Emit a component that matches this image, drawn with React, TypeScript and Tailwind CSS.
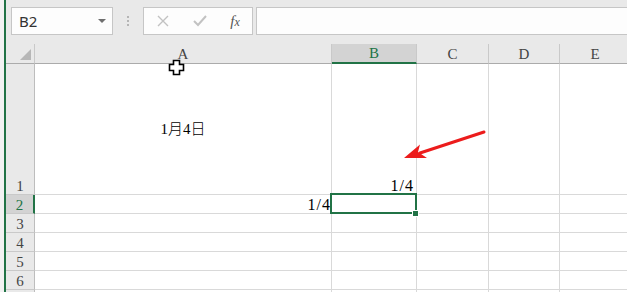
import React from "react";

const serif = { fontFamily: '"Liberation Serif", "Noto Sans CJK SC", serif' };

function Cell({ className = "", children }: { className?: string; children?: React.ReactNode }) {
  return (
    <div className={"box-border border-r border-b border-[#d9d9d9] bg-white text-[15px] text-black leading-none " + className} style={serif}>
      {children}
    </div>
  );
}

function RowHead({ n, active = false }: { n?: number; active?: boolean }) {
  return (
    <div
      className={
        "box-border flex items-end justify-center pb-0 text-[15px] leading-none border-b border-[#c9c9c9] " +
        (active ? "bg-[#d3d3d3] text-[#217346] border-r-2 border-r-[#217346]" : "bg-[#e9e9e9] text-[#444] border-r border-r-[#bdbdbd]")
      }
      style={serif}
    >
      {n}
    </div>
  );
}

function ColHead({ label, active = false }: { label: string; active?: boolean }) {
  return (
    <div
      className={
        "box-border flex items-center justify-center pt-[1px] text-[15px] leading-none border-r border-[#c9c9c9] " +
        (active ? "bg-[#d3d3d3] text-[#217346] border-b-2 border-b-[#217346]" : "bg-[#e9e9e9] text-[#444] border-b border-b-[#ababab]")
      }
      style={serif}
    >
      {label}
    </div>
  );
}

export default function App() {
  return (
    <div className="relative w-[627px] h-[292px] overflow-hidden flex bg-[#e9e9e9]">
      <div className="w-[4px] shrink-0 bg-[#f2f2f2]" />
      <div className="w-[2px] shrink-0 bg-[#217346]" />
      <div className="flex-1 min-w-0 overflow-hidden flex flex-col">
        {/* formula bar */}
        <div className="h-[44px] shrink-0 flex items-start pt-[7px] pl-[5px] box-border">
          <div className="w-[102px] h-[28px] shrink-0 box-border border border-[#c6c6c6] bg-[#fdfdfd] flex items-center pl-[7px] pr-[6px]">
            <span className="text-[15px] text-[#333] flex-1" style={{ fontFamily: '"Noto Sans", "Liberation Sans", sans-serif' }}>
              B2
            </span>
            <svg width="8" height="5" viewBox="0 0 8 5">
              <path d="M0 0 L8 0 L4 4 Z" fill="#6f6f6f" />
            </svg>
          </div>
          <div className="w-[30px] h-[28px] shrink-0 flex flex-col items-center justify-center gap-[2px]">
            <div className="w-[2px] h-[2px] bg-[#b5b5b5]" />
            <div className="w-[2px] h-[2px] bg-[#b5b5b5]" />
            <div className="w-[2px] h-[2px] bg-[#b5b5b5]" />
          </div>
          <div className="w-[110px] h-[28px] shrink-0 box-border border border-[#c6c6c6] bg-[#fdfdfd] flex items-center">
            <div className="w-[38px] flex justify-center">
              <svg width="12" height="12" viewBox="0 0 12 12">
                <path d="M1 1 L11 11 M11 1 L1 11" stroke="#c2c2c2" strokeWidth="1.4" />
              </svg>
            </div>
            <div className="w-[36px] flex justify-center">
              <svg width="14" height="12" viewBox="0 0 14 12">
                <path d="M1 6 L5 10 L13 1" stroke="#c2c2c2" strokeWidth="2" fill="none" />
              </svg>
            </div>
            <div className="w-[34px] flex justify-center">
              <span className="italic text-[15px] text-[#555] leading-none" style={{ fontFamily: '"Liberation Serif", serif' }}>
                f<span className="text-[12px]">x</span>
              </span>
            </div>
          </div>
          <div className="ml-[3px] flex-1 h-[28px] box-border border border-[#c6c6c6] border-r-0 bg-[#fdfdfd]" />
        </div>
        {/* grid */}
        <div className="shrink-0 grid grid-cols-[29px_297px_85px_72px_71px_71px] grid-rows-[20px_131px_19px_19px_19px_19px_19px_19px]">
          <div className="box-border border-r border-b border-r-[#c9c9c9] border-b-[#ababab] bg-[#e9e9e9] relative">
            <svg className="absolute right-[3px] bottom-[3px]" width="11" height="11" viewBox="0 0 11 11">
              <path d="M11 0 L11 11 L0 11 Z" fill="#b7b7b7" />
            </svg>
          </div>
          <ColHead label="A" />
          <ColHead label="B" active />
          <ColHead label="C" />
          <ColHead label="D" />
          <ColHead label="E" />

          <RowHead n={1} />
          <Cell className="flex items-center justify-center">
            <span className="font-light">1月4日</span>
          </Cell>
          <Cell className="flex items-end justify-end pr-[2px] pb-0 tracking-[1px] text-[16px]">1/4</Cell>
          <Cell />
          <Cell />
          <Cell />

          <RowHead n={2} active />
          <Cell className="flex items-end justify-end pr-0 pb-0 tracking-[1px] text-[16px]">1/4</Cell>
          <Cell />
          <Cell />
          <Cell />
          <Cell />

          {[3, 4, 5, 6, 0].map((n) => (
            <React.Fragment key={n}>
              <RowHead n={n || undefined} />
              <Cell />
              <Cell />
              <Cell />
              <Cell />
              <Cell />
            </React.Fragment>
          ))}
        </div>
      </div>

      {/* selection */}
      <div className="absolute left-[330px] top-[193px] w-[87px] h-[21px] box-border border-2 border-[#217346]" />
      <div className="absolute left-[412px] top-[210px] w-[7px] h-[7px] box-border border border-white bg-[#217346]" />

      {/* cursor */}
      <svg className="absolute left-[168px] top-[59px]" width="17" height="17" viewBox="0 0 17 17">
        <path d="M5.5 1.5 H11.5 V5.5 H15.5 V11.5 H11.5 V15.5 H5.5 V11.5 H1.5 V5.5 H5.5 Z" fill="white" stroke="black" strokeWidth="1.6" />
      </svg>

      {/* red arrow */}
      <svg className="absolute left-0 top-0 pointer-events-none" width="627" height="292" viewBox="0 0 627 292">
        <path d="M484 132 L420 153" stroke="#ec1c1c" strokeWidth="3" strokeLinecap="round" />
        <path d="M404 158 L420 144.5 L418 152 L427 158 Z" fill="#ec1c1c" />
      </svg>
    </div>
  );
}
